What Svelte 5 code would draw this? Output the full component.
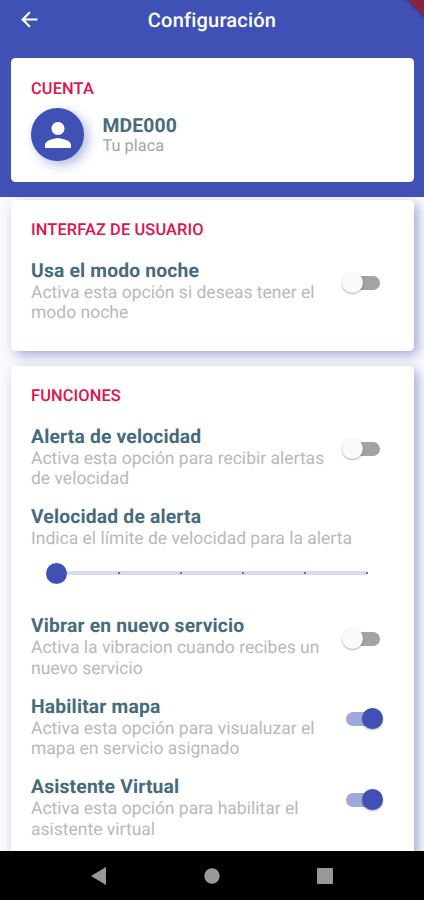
<script>
  const features = [
    { title: 'Vibrar en nuevo servicio', lines: ['Activa la vibracion cuando recibes un', 'nuevo servicio'], on: false },
    { title: 'Habilitar mapa', lines: ['Activa esta opción para visualuzar el', 'mapa en servicio asignado'], on: true },
    { title: 'Asistente Virtual', lines: ['Activa esta opción para habilitar el', 'asistente virtual'], on: true }
  ];
  const ticks = [0, 1, 2, 3, 4, 5];
</script>

{#snippet option(title, lines, on)}
  <div class="row">
    <div class="copy">
      <h3>{title}</h3>
      <p>{#each lines as line, i}{#if i}<br />{/if}{line}{/each}</p>
    </div>
    <div class="switch" class:on role="switch" aria-checked={on} aria-label={title} tabindex="0"><i></i></div>
  </div>
{/snippet}

<div class="screen">
  <div class="top">
    <header>
      <svg class="back" width="17" height="17" viewBox="0 0 17 17" fill="none" stroke="#fff" stroke-width="2.1"><path d="M16.5 8.5H2M8.9 1.2 1.6 8.5l7.3 7.3" /></svg>
      <h1>Configuración</h1>
      <div class="ribbon"></div>
    </header>
    <section class="card account">
      <h2>CUENTA</h2>
      <div class="profile">
        <div class="avatar">
          <svg width="26" height="26" viewBox="4 4 16 16" fill="#fff"><path d="M12 12c2.21 0 4-1.79 4-4s-1.79-4-4-4-4 1.79-4 4 1.79 4 4 4zm0 2c-2.67 0-8 1.34-8 4v2h16v-2c0-2.66-5.33-4-8-4z" /></svg>
        </div>
        <div class="identity">
          <h3>MDE000</h3>
          <p class="plate">Tu placa</p>
        </div>
      </div>
    </section>
  </div>

  <main>
    <section class="card ui">
      <h2>INTERFAZ DE USUARIO</h2>
      {@render option('Usa el modo noche', ['Activa esta opción si deseas tener el', 'modo noche'], false)}
    </section>
    <section class="card functions">
      <h2>FUNCIONES</h2>
      {@render option('Alerta de velocidad', ['Activa esta opción para recibir alertas', 'de velocidad'], false)}
      <div class="speed">
        <h3>Velocidad de alerta</h3>
        <p>Indica el límite de velocidad para la alerta</p>
        <div class="slider">
          {#each ticks as t}<span class:thumb={t === 0}></span>{/each}
        </div>
      </div>
      {#each features as f}
        {@render option(f.title, f.lines, f.on)}
      {/each}
    </section>
  </main>

  <nav>
    <svg width="16" height="18" viewBox="0 0 16 18" fill="#999"><path d="M15 0v18L0 9z" /></svg>
    <svg width="16" height="16" viewBox="0 0 16 16" fill="#999"><circle cx="8" cy="8" r="7.7" /></svg>
    <svg width="16" height="16" viewBox="0 0 16 16" fill="#999"><rect width="16" height="16" rx="1" /></svg>
  </nav>
</div>

<style>
  :global(body) { margin: 0; }
  .screen {
    width: 424px; height: 900px; overflow: hidden;
    display: flex; flex-direction: column;
    background: #fafafc; font-family: Roboto, sans-serif;
    text-rendering: geometricPrecision;
  }
  h1, h2, h3, p { margin: 0; }
  .top { height: 196.5px; flex: none; background: #3f51b5; z-index: 1; }
  header { position: relative; height: 58px; overflow: hidden; }
  header h1 {
    text-align: center; padding-top: 8px; line-height: 24px;
    font-size: 20px; font-weight: 500; color: #fff; letter-spacing: 0.2px;
  }
  .back { position: absolute; left: 21px; top: 11px; }
  .ribbon {
    position: absolute; right: -26px; top: -8.5px; width: 60px; height: 17px;
    background: #84243f; transform: rotate(45deg); box-shadow: 0 0 4px #0006;
  }
  .card { box-sizing: border-box; margin: 0 10.5px; padding-left: 20.5px; background: #fff; border-radius: 4.5px; }
  .account { height: 124px; padding-top: 22px; }
  h2 { font-size: 16.4px; line-height: 20px; font-weight: 500; color: #e0124f; letter-spacing: 0.12px; }
  h3 { font-size: 19.3px; line-height: 22px; font-weight: 700; color: #456b7c; letter-spacing: 0.18px; }
  p { font-size: 17.5px; line-height: 20.5px; padding-top: 1px; color: #b9b9b9; white-space: nowrap; }
  .profile { display: flex; align-items: center; gap: 19px; padding-top: 8px; }
  .identity { padding-top: 4px; }
  .avatar {
    width: 52.5px; height: 52.5px; border-radius: 50%; background: #3f51b5;
    display: flex; align-items: center; justify-content: center;
    box-shadow: 4px 4px 12px #3f51b566;
  }
  .avatar svg { margin: 1px 0 0 1px; }
  .plate { color: #a5a5a5; font-size: 16.4px; padding: 0; }
  main { flex: 1; min-height: 0; overflow: hidden; }
  main .card { box-shadow: 4px 4px 12px #3f51b578; }
  .ui { height: 151px; margin-top: 3.5px; padding-top: 20.5px; }
  .functions { height: 540px; margin-top: 15px; padding-top: 20.5px; }
  .row { display: flex; align-items: flex-start; justify-content: space-between; height: 62px; padding: 0 33px 18.4px 0; }
  h2 + .row { padding-top: 19px; }
  .switch { position: relative; width: 40px; height: 24px; margin-top: 11.5px; flex: none; }
  .switch::before { content: ''; position: absolute; left: 5px; top: 5px; width: 34px; height: 14px; border-radius: 7px; background: #a3a3a3; }
  .switch i { position: absolute; left: 1.5px; top: 1px; width: 21px; height: 21px; border-radius: 50%; background: #fafafa; box-shadow: 0 1px 2px #0005; }
  .switch.on::before { background: #9fa8da; }
  .switch.on i { left: 21px; background: #3f51b5; }
  .speed { height: 109.5px; }
  .slider {
    margin: 22px 45.5px 0 25.5px; height: 4px; border-radius: 2px; background: #d7daf0;
    display: flex; justify-content: space-between; align-items: center;
  }
  .slider span { width: 2px; height: 2px; border-radius: 50%; background: #3f51b5; }
  .slider .thumb { width: 21px; height: 21px; margin: 0 -8.5px 0 -10.5px; }
  nav {
    height: 49px; flex: none; z-index: 1; background: #000;
    display: flex; align-items: center; justify-content: center; gap: 97px;
  }
</style>
